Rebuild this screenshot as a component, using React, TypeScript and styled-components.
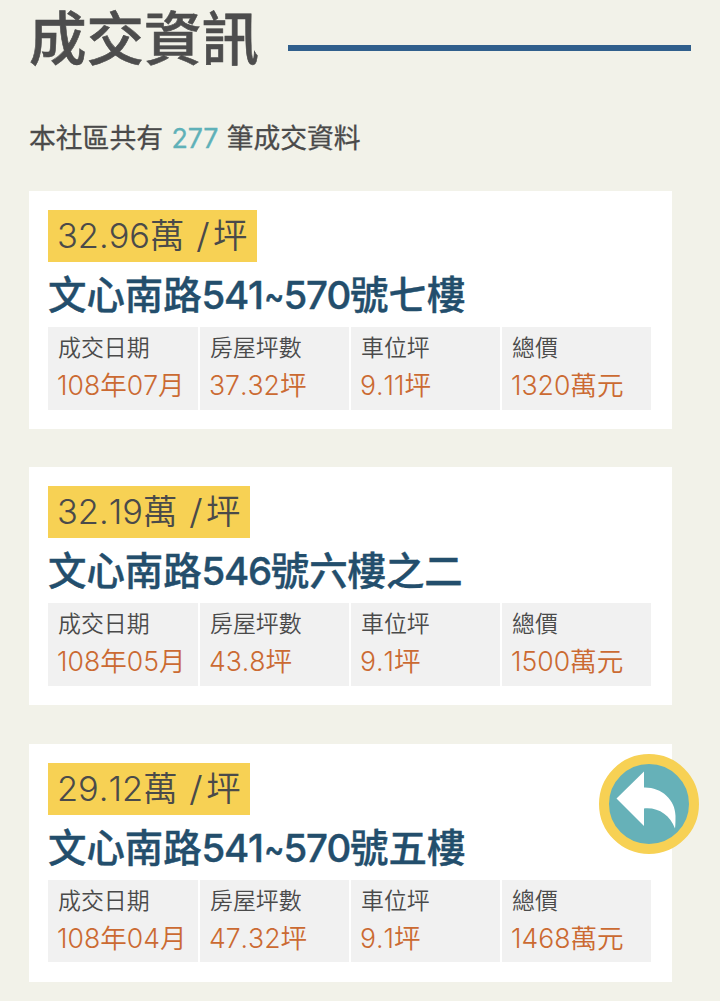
import React from "react";
import styled, { createGlobalStyle } from "styled-components";

const GlobalStyle = createGlobalStyle`
  * { box-sizing: border-box; }
  html, body { margin: 0; background: #f2f2e9; }
  body {
    height: 1001px;
    overflow: hidden;
    font-family: Inter, "Noto Sans CJK TC", sans-serif;
    color: #4a4a4a;
  }
`;

const Page = styled.main`
  width: 720px;
  height: 1001px;
  overflow: hidden;
  padding: 0 29px;
`;

const Header = styled.header`
  display: flex;
  align-items: center;
  height: 95px;
`;

const Title = styled.h1`
  margin: -18px 30px 0 0;
  width: 229px;
  flex: none;
  font-size: 57.5px;
  line-height: 76px;
  font-weight: 500;
  -webkit-text-stroke: 0.6px #4d4d4d;
  white-space: nowrap;
  color: #4d4d4d;
`;

const Rule = styled.div`
  flex: 1;
  height: 6px;
  background: #305f8c;
`;

const Summary = styled.p`
  margin: 23px 0 33px;
  font-size: 26.8px;
  line-height: 40px;
  font-weight: 400;
  -webkit-text-stroke: 0.3px;
  white-space: pre;
`;

const Count = styled.span`
  margin: 0 1px;
  letter-spacing: -0.2px;
  color: #5fb1b8;
`;

const List = styled.section`
  display: flex;
  flex-direction: column;
  gap: 38.4px;
  width: 643px;
`;

const Card = styled.article`
  height: 238px;
  padding: 19px 20px 19px 19px;
  background: #fff;
  display: flex;
  flex-direction: column;
  align-items: flex-start;
`;

const Digits = styled.span<{ $weight: number; $spacing?: number }>`
  font-weight: ${(p) => p.$weight};
  letter-spacing: ${(p) => p.$spacing ?? 0}px;
  font-kerning: none;
`;

const Tilde = styled.span`
  display: inline-block;
  width: 20px;
  margin-left: 1px;
  transform: scaleX(0.8);
  transform-origin: left;
`;

const Price = styled.div<{ $width: number }>`
  width: ${(p) => p.$width}px;
  height: 52px;
  padding-left: 9px;
  background: #f7d154;
  font-size: 34.4px;
  line-height: 52px;
  font-weight: 350;
  white-space: pre;
`;

const Slash = styled.span`
  display: inline-block;
  width: 14px;
  margin: 0 2px 0 3px;
  font-weight: 300;
  transform: scaleX(1.15);
`;

const Address = styled.h2`
  margin: 9px 0 0;
  height: 56px;
  font-size: 38.4px;
  line-height: 48px;
  font-weight: 500;
  -webkit-text-stroke: 0.4px;
  white-space: nowrap;
  color: #234e6c;
`;

const Details = styled.dl`
  display: grid;
  grid-template-columns: 150px repeat(3, 1fr);
  gap: 2px;
  width: 603px;
  height: 82.5px;
  margin: 0;
`;

const Detail = styled.div`
  padding: 5px 0 0 10px;
  background: #f1f1f1;
  white-space: nowrap;
`;

const Label = styled.dt`
  font-size: 22.9px;
  line-height: 32px;
  font-weight: 350;
`;

const Value = styled.dd`
  margin: 2px 0 0 -1px;
  font-size: 26.6px;
  line-height: 38px;
  font-weight: 350;
  color: #cb6a32;
`;

const BackButton = styled.button`
  position: fixed;
  left: 599px;
  top: 754px;
  width: 100px;
  height: 100px;
  padding: 0;
  border: 10px solid #f7d154;
  border-radius: 50%;
  background: #66b1b8;
  svg { display: block; }
`;

const renderMixed = (text: string, weight: number, spacing = 0) =>
  text.split(/([\d.]+|~)/).map((part, i) => {
    if (part === "~") return <Tilde key={i}>~</Tilde>;
    return /\d/.test(part) ? (
      <Digits key={i} $weight={weight} $spacing={spacing}>
        {part}
      </Digits>
    ) : (
      part
    );
  });

const labels = ["成交日期", "房屋坪數", "車位坪", "總價"];

const deals = [
  { price: "32.96", width: 209, address: "文心南路541~570號七樓", values: ["108年07月", "37.32坪", "9.11坪", "1320萬元"] },
  { price: "32.19", width: 202, address: "文心南路546號六樓之二", values: ["108年05月", "43.8坪", "9.1坪", "1500萬元"] },
  { price: "29.12", width: 202, address: "文心南路541~570號五樓", values: ["108年04月", "47.32坪", "9.1坪", "1468萬元"] },
];

export default function App() {
  return (
    <>
      <GlobalStyle />
      <Page>
        <Header>
          <Title>成交資訊</Title>
          <Rule />
        </Header>
        <Summary>
          本社區共有 <Count>277</Count> 筆成交資料
        </Summary>
        <List>
          {deals.map((deal) => (
            <Card key={deal.price}>
              <Price $width={deal.width}>
                {renderMixed(deal.price, 300)}萬 <Slash>/</Slash>坪
              </Price>
              <Address>{renderMixed(deal.address, 500, -1.3)}</Address>
              <Details>
                {labels.map((label, i) => (
                  <Detail key={label}>
                    <Label>{label}</Label>
                    <Value>{renderMixed(deal.values[i], 300)}</Value>
                  </Detail>
                ))}
              </Details>
            </Card>
          ))}
        </List>
      </Page>
      <BackButton aria-label="返回">
        <svg width="80" height="80" viewBox="0 0 80 80">
          <path d="M7.500 34.500 L35 7.500 V23.500 C52 23 66.500 35.500 66.500 52 C66.500 56 66.500 61 66 64.500 C61 51 49 43 35 44.500 V62 Z" fill="#fff" />
        </svg>
      </BackButton>
    </>
  );
}
